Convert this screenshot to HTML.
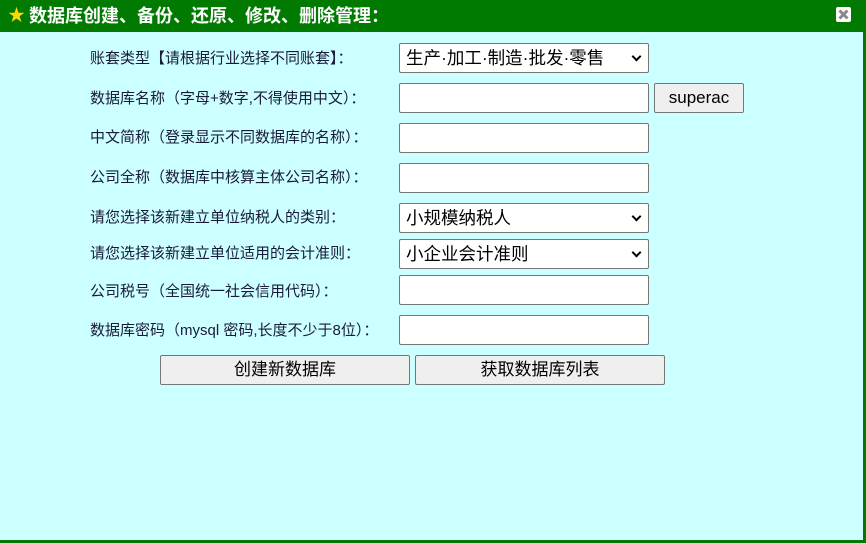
<!DOCTYPE html>
<html><head><meta charset="utf-8"><style>
body{margin:0;width:866px;height:543px;background:#ccffff;position:relative;overflow:hidden;font-family:"Liberation Sans","Noto Sans CJK SC",sans-serif;}
.hd{position:absolute;left:0;top:0;width:866px;height:32px;background:#007a00;color:#fff;font-weight:bold;font-size:18px;line-height:32px;}
.rb{position:absolute;right:0;top:0;width:3px;height:543px;background:#007a00}
.bb{position:absolute;left:0;bottom:0;width:866px;height:3px;background:#007a00}
.lb{position:absolute;left:90px;font-size:15px;color:#1a1a3a;line-height:20px}
.in{position:absolute;left:399px;width:248px;height:28px;border:1px solid #767676;border-radius:2px;background:#fff;box-sizing:content-box}
.sel{font-size:17.5px;line-height:28px;padding-left:6px;width:242px;color:#000}
.sel:after{content:"";position:absolute;right:8px;top:9px;width:5px;height:5px;border-right:2px solid #000;border-bottom:2px solid #000;transform:rotate(45deg)}
.bt{position:absolute;height:28px;border:1px solid #767676;border-radius:2px;background:#efefef;font-size:17px;line-height:28px;text-align:center;color:#000}
</style></head><body>
<div class="hd"><span style="position:absolute;left:8px;top:0;color:#ffd700;font-size:17px">★</span><span style="position:absolute;left:29px">数据库创建、备份、还原、修改、删除管理：</span>
<div style="position:absolute;left:836px;top:7px;width:15px;height:15px;background:#fff;border-radius:2px;line-height:0"><svg width="15" height="15" style="display:block"><path d="M3.5 3.5L11.5 11.5M11.5 3.5L3.5 11.5" stroke="#888" stroke-width="3"/></svg></div></div>
<div class="rb"></div><div class="bb"></div>
<div class="lb" style="top:49px">账套类型【请根据行业选择不同账套】：</div>
<div class="in sel" style="top:43px">生产·加工·制造·批发·零售</div>
<div class="lb" style="top:89px">数据库名称（字母+数字,不得使用中文）：</div>
<div class="in" style="top:83px"></div>
<div class="bt" style="left:654px;top:83px;width:88px">superac</div>
<div class="lb" style="top:128px">中文简称（登录显示不同数据库的名称）：</div>
<div class="in" style="top:123px"></div>
<div class="lb" style="top:168px">公司全称（数据库中核算主体公司名称）：</div>
<div class="in" style="top:163px"></div>
<div class="lb" style="top:208px">请您选择该新建立单位纳税人的类别：</div>
<div class="in sel" style="top:203px">小规模纳税人</div>
<div class="lb" style="top:244px">请您选择该新建立单位适用的会计准则：</div>
<div class="in sel" style="top:239px">小企业会计准则</div>
<div class="lb" style="top:282px">公司税号（全国统一社会信用代码）：</div>
<div class="in" style="top:275px"></div>
<div class="lb" style="top:321px">数据库密码（mysql 密码,长度不少于8位）：</div>
<div class="in" style="top:315px"></div>
<div class="bt" style="left:160px;top:355px;width:248px">创建新数据库</div>
<div class="bt" style="left:415px;top:355px;width:248px">获取数据库列表</div>
</body></html>
